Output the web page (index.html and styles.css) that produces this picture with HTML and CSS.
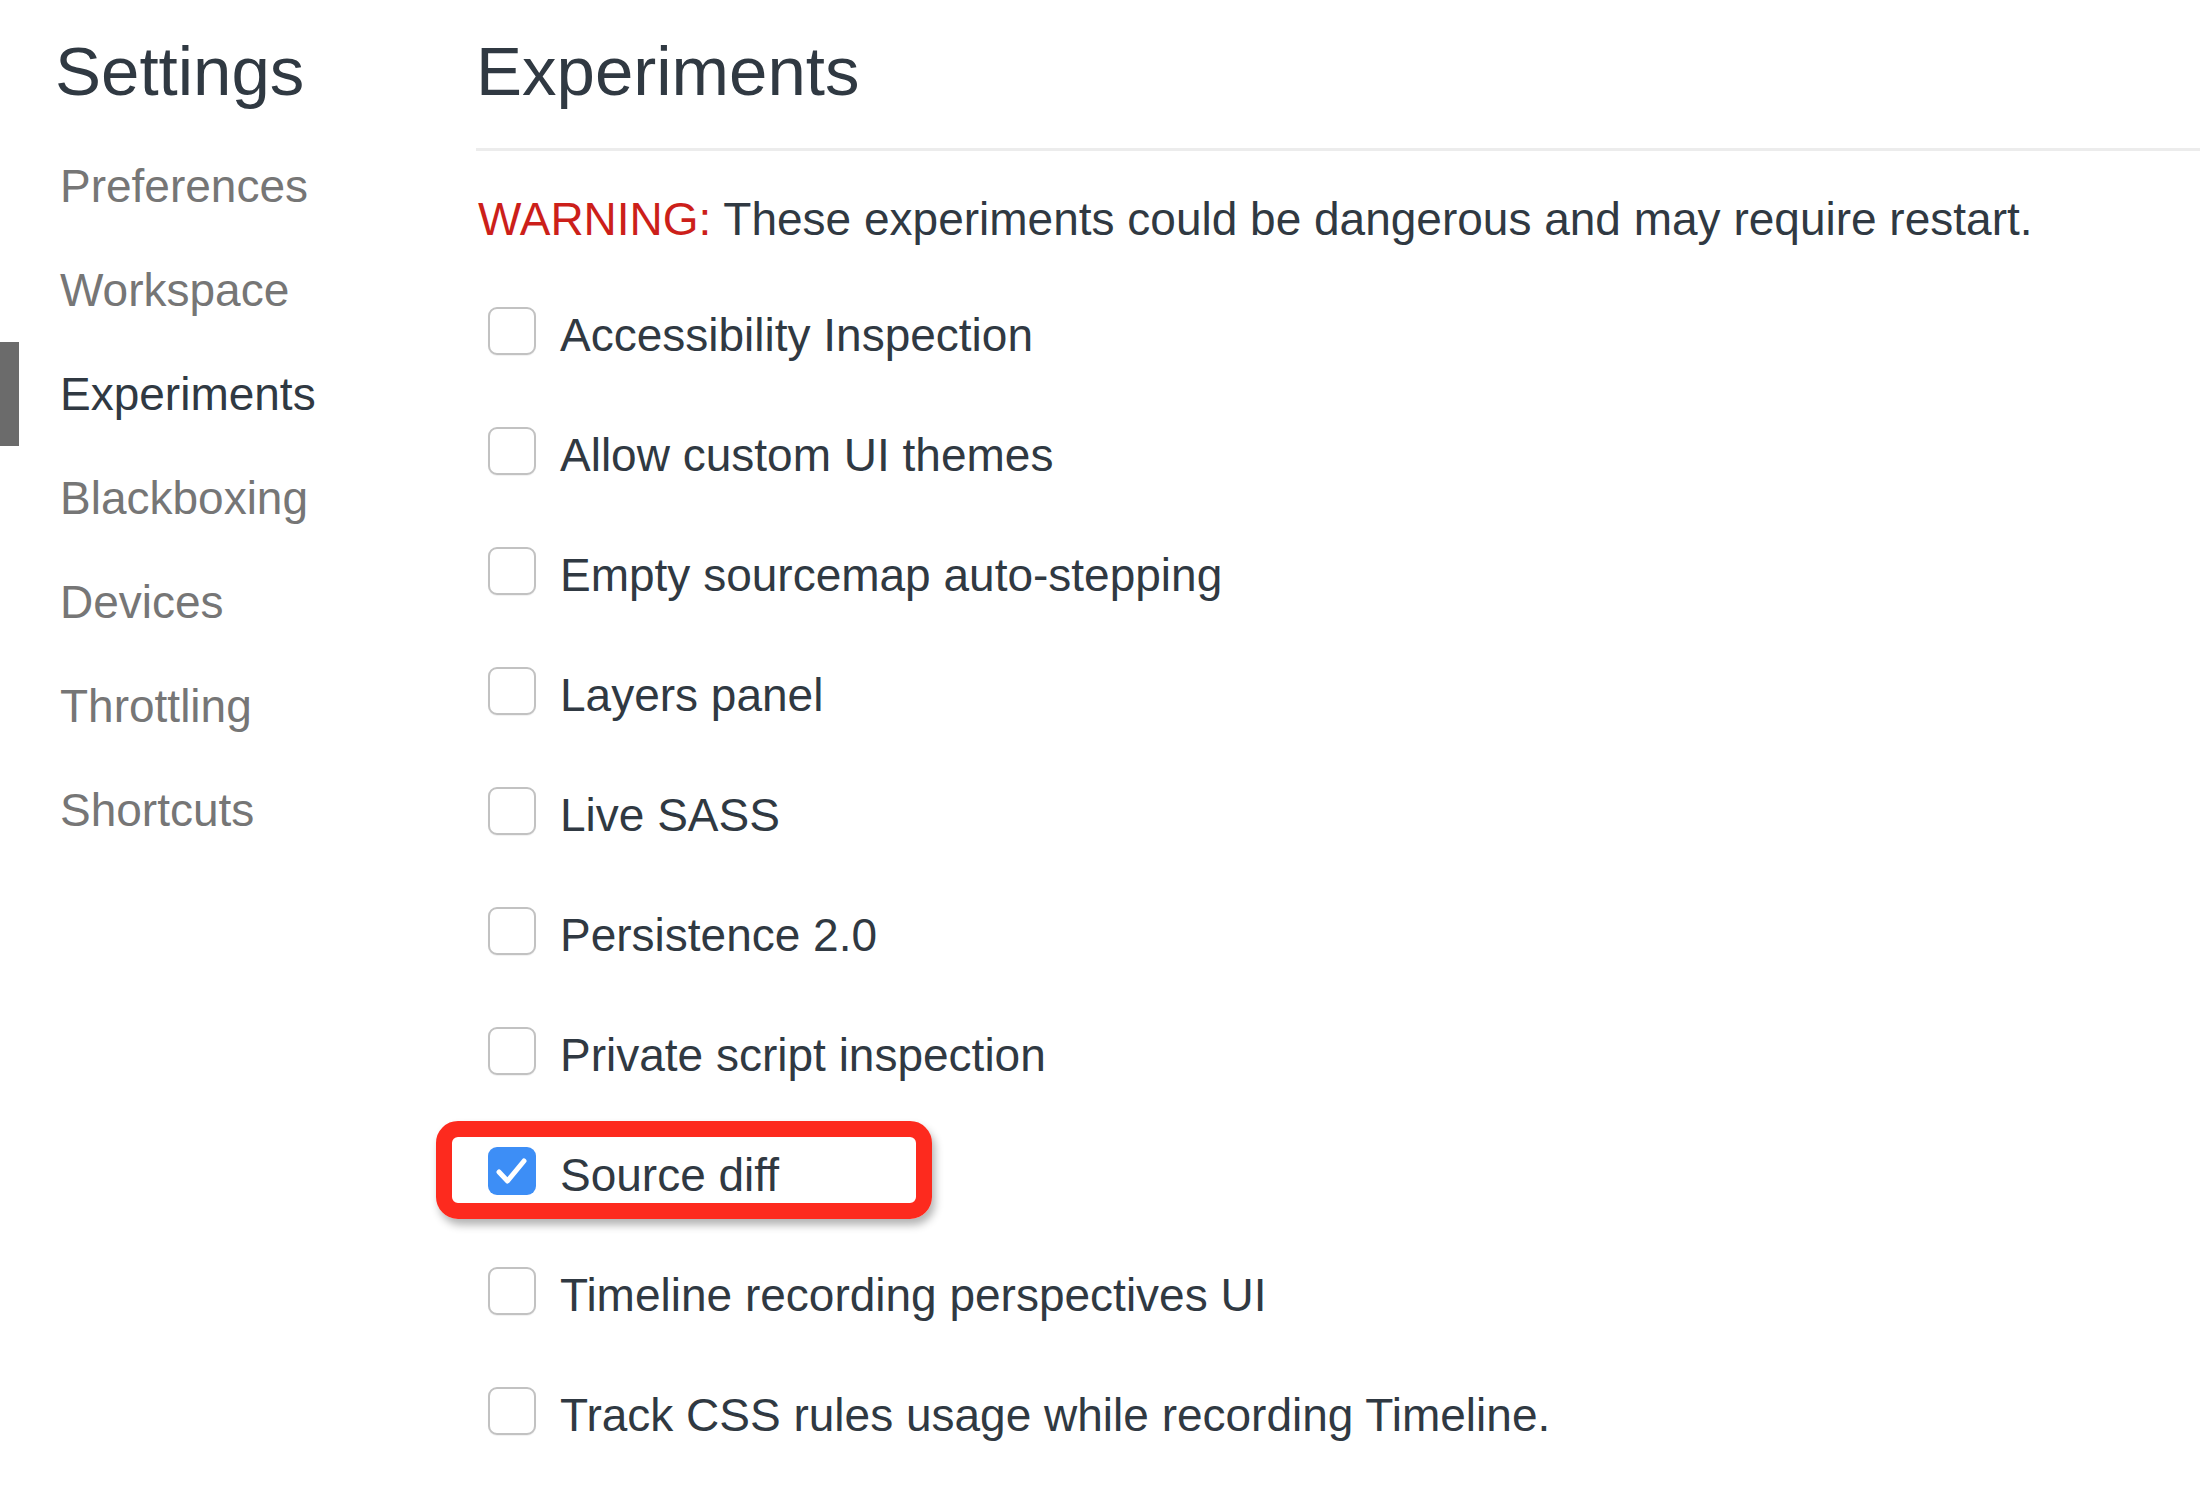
FILE: index.html
```html
<!DOCTYPE html>
<html lang="en">
<head>
<meta charset="utf-8">
<title>Settings - Experiments</title>
<link rel="stylesheet" href="styles.css">
</head>
<body>
<div class="page">
  <aside class="sidebar">
    <h1 class="sidebar-title">Settings</h1>
    <ul class="nav">
      <li class="nav-item">Preferences</li>
      <li class="nav-item">Workspace</li>
      <li class="nav-item active">Experiments</li>
      <li class="nav-item">Blackboxing</li>
      <li class="nav-item">Devices</li>
      <li class="nav-item">Throttling</li>
      <li class="nav-item">Shortcuts</li>
    </ul>
  </aside>
  <main class="main">
    <h2 class="main-title">Experiments</h2>
    <p class="warning"><span class="warning-label">WARNING:</span> These experiments could be dangerous and may require restart.</p>
    <ul class="experiments">
      <li class="exp"><span class="box"></span><span class="label">Accessibility Inspection</span></li>
      <li class="exp"><span class="box"></span><span class="label">Allow custom UI themes</span></li>
      <li class="exp"><span class="box"></span><span class="label">Empty sourcemap auto-stepping</span></li>
      <li class="exp"><span class="box"></span><span class="label">Layers panel</span></li>
      <li class="exp"><span class="box"></span><span class="label">Live SASS</span></li>
      <li class="exp"><span class="box"></span><span class="label">Persistence 2.0</span></li>
      <li class="exp"><span class="box"></span><span class="label">Private script inspection</span></li>
      <li class="exp highlighted">
        <span class="box checked"><svg viewBox="0 0 48 48" width="48" height="48"><path d="M11 25 L19.5 34 L36 14" fill="none" stroke="#fff" stroke-width="5" stroke-linecap="round" stroke-linejoin="round"/></svg></span>
        <span class="label">Source diff</span>
        <span class="highlight-frame"></span>
      </li>
      <li class="exp"><span class="box"></span><span class="label">Timeline recording perspectives UI</span></li>
      <li class="exp"><span class="box"></span><span class="label">Track CSS rules usage while recording Timeline.</span></li>
    </ul>
  </main>
</div>
</body>
</html>
```

FILE: styles.css
```css
html, body {
  margin: 0;
  padding: 0;
  background: #ffffff;
}

body {
  font-family: "Liberation Sans", Arial, Helvetica, sans-serif;
  color: #303942;
  width: 2200px;
  height: 1512px;
  overflow: hidden;
}

.page {
  display: flex;
  align-items: flex-start;
}

.sidebar {
  width: 476px;
  flex: none;
  padding-top: 32px;
}

.sidebar-title {
  margin: 0;
  padding-left: 55px;
  font-size: 69px;
  line-height: 80px;
  font-weight: normal;
  color: #303942;
}

.nav {
  list-style: none;
  margin: 22px 0 0 0;
  padding: 0;
}

.nav-item {
  height: 104px;
  line-height: 104px;
  padding-left: 60px;
  font-size: 46px;
  color: #767676;
}

.nav-item.active {
  color: #303942;
  box-shadow: inset 19px 0 0 #6b6b6b;
}

.main {
  flex: 1;
  padding-top: 32px;
}

.main-title {
  margin: 0;
  font-size: 69px;
  line-height: 80px;
  font-weight: normal;
  color: #303942;
  padding-bottom: 36px;
  border-bottom: 3px solid #ececec;
}

.warning {
  margin: 38px 0 0 0;
  font-size: 46px;
  line-height: 60px;
  color: #303942;
  padding-left: 2px;
}

.warning-label {
  color: #cc1f1a;
}

.experiments {
  list-style: none;
  margin: 22px 0 0 0;
  padding: 0;
}

.exp {
  position: relative;
  height: 120px;
  display: flex;
  align-items: center;
  gap: 24px;
  padding-left: 12px;
}

.box {
  flex: none;
  width: 48px;
  height: 48px;
  box-sizing: border-box;
  border: 2px solid #c2c2c2;
  border-radius: 9px;
  background: #ffffff;
  box-shadow: 0 1px 1px rgba(0, 0, 0, 0.06);
}

.box.checked {
  border: none;
  background: #3d8ef6;
  box-shadow: none;
}

.box.checked svg {
  display: block;
}

.label {
  font-size: 46px;
  line-height: 60px;
  padding-top: 7px;
  color: #303942;
}

.highlight-frame {
  position: absolute;
  left: -40px;
  top: 10px;
  width: 496px;
  height: 98px;
  box-sizing: border-box;
  border: 16px solid #fd2a1e;
  border-radius: 22px;
  box-shadow: 3px 6px 8px rgba(0, 0, 0, 0.3);
  pointer-events: none;
}
```
